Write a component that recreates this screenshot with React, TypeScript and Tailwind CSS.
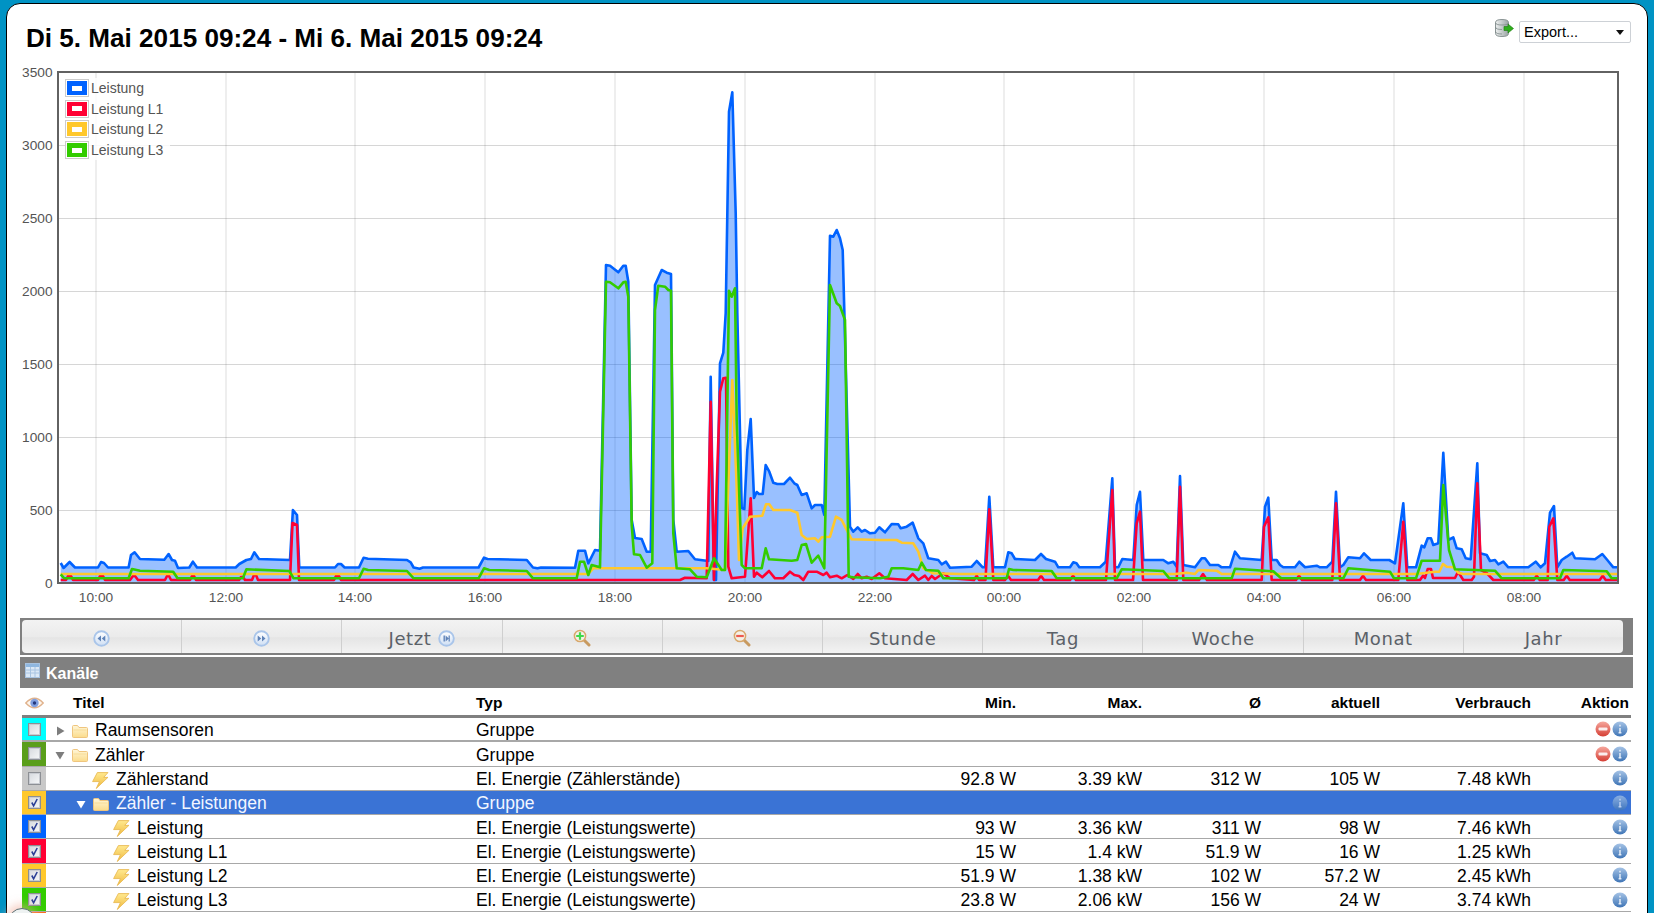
import React from 'react';

const FONT = '"Liberation Sans", Arial, sans-serif';

// chart traces, in page pixels
const BLUE = '60.7,563 63.6,568 69.6,562 75,567.5 98,567.5 101,562 104,563 108,567.5 128.6,567.5 131,555 134.6,552.3 140,559 164.3,559.7 168.6,554 172,560 175,560.7 178,568 189.3,567.5 192.9,561.7 197,567.5 235.7,567.5 239.3,564 246.4,560 251,559 254.3,552.3 259,559 290,560 292.9,510 297,515 299.3,567.5 335,567.5 338,564 341,564 344.6,567.5 359,567.5 363.6,557.7 368,558.7 407,560 410.7,562.3 413.6,567.5 419.6,568.7 423,567.5 478.6,567.5 484,557.7 487.5,559 526.8,560 533,567.5 537.5,568.3 541,567.5 575,567.7 578.3,550.7 585,550.7 588.3,563.3 595,550 600,550.7 606,265 610,265.7 618.3,272.3 623.3,265.7 625.7,265.7 628.3,281.7 631.7,520 635,538 641.7,539 646.7,551.7 650.7,551.7 655,285 661.7,270 666.7,272.7 671,274 673.3,520 676.7,551.7 688.3,551 695,559.3 708.3,561 710.7,376.7 714,580 716,580 720,363.3 723.3,352.7 725.7,313 729,111.7 732.3,92.3 735.7,213 737.3,313 741.7,508 744.3,509 747.3,450 750.7,419 754,498 756.7,492 759,494 762.7,494 765.7,465 769.3,471.7 773.3,482.7 777.3,484 784,484 790,477.7 794.3,483.3 797.3,485 801.7,495 806.7,493.3 811.7,508.3 815,505 821.7,505 824.3,515 830,235.7 833.3,236.7 836.7,230 840,238.3 842.7,250 850,526.7 853.3,531.7 857.7,527.3 861.7,531.7 865,530 870,533.3 875,532.7 879.3,527.3 885,532.3 891.7,524 898.3,524.3 900.7,528.3 906.7,526.7 912.7,522.7 918.3,538.3 923.3,543.3 928.3,558.3 938.3,560 941.7,564.3 946,561.7 950,567.7 971.7,566.7 976.7,561 982.7,567.3 985,567.3 989.3,496.7 993.3,567.3 1005,567.3 1008.3,552.3 1011.7,553.3 1015,559 1035,560 1041,554 1046,559 1055,561.7 1058.3,567.3 1070,567.3 1073.3,562.3 1076.5,563.3 1079.3,567.3 1100,567.3 1105.7,561.7 1112.3,478.3 1115,567.3 1118.3,567.3 1122.3,559 1133.3,560 1136.7,505 1140,491.7 1143.3,560 1163.3,560 1168.3,563.3 1173.3,561.7 1176.7,566.7 1180,476 1183.3,565 1195,567.3 1201.7,558.3 1205,558.3 1210,565 1218.3,565 1221.7,567.3 1230,567.3 1235,551.7 1240,558.3 1261.7,560 1265,506.7 1268.3,497.7 1271.7,560 1276.7,560 1280,565 1283.3,567.3 1295,567.3 1299.3,561.7 1305,567.3 1316.7,565.7 1320,567.3 1326.7,567.3 1332.3,561.7 1336,491.7 1340,567.3 1343.3,565 1348.3,557.3 1360,558.3 1364,553.3 1370.7,560 1389.3,560 1395,563.3 1403.3,503.3 1407.3,567.3 1416,567.3 1421.7,545.7 1424.3,547.3 1427.7,538.3 1431,538.3 1433.3,545 1438.3,543.3 1443.3,452.7 1448.3,540 1453.3,537.3 1456.7,548.3 1461.7,549.3 1465.7,558.3 1470.7,559.3 1477.3,463.3 1480,553.3 1486.7,555 1490,561 1495,560 1498.3,564.3 1503.3,561.7 1508.3,567.3 1528.3,567.3 1535.7,561.7 1540.7,567.3 1545,563.3 1550,512.7 1554,506 1557.3,567.3 1561.7,560 1566.7,556.7 1572.3,552.7 1575,558.3 1595,559.3 1602.3,554 1607.3,560 1613.3,567.3 1617,567.3';

const RED = '60.7,580 66,580 68,576 71,576 73,580 98,580 100,576 103,576 105,580 130,580 133,576 135,576 138,580 165,580 167,576 169,576 171,580 190,580 192,576 194,576 196,580 239,580 241,577 243,577 245,580 252,580 254,575 256,575 258,580 290,580 292.5,523 297,525 299,580 334,580 336,576 339,576 341,580 680,580 685,577.7 706.7,578.3 710.7,401.7 714,580 716.7,486.7 720,391.7 723.3,378.3 726,377.7 728.3,566.7 731.7,578.3 745,576.7 750.7,498.3 754,576.7 756.7,572.7 762.3,577.3 769,571 775,578.3 783.3,578.3 790,571.7 794.3,575 799,576 803.3,580 808.3,571.7 816.7,571.7 823.3,575 826.7,572.7 830,577.3 836.7,575.7 841.7,578.3 847.3,575 853.3,579 857.7,574 861.7,578.3 866.7,576.7 871.7,579 879.3,573.3 885,578.3 906.7,580 912.7,574 918.3,580 925,575.7 928.3,580 931.7,576 935,579 943.3,573.3 950,578.3 974,580 976.7,575.7 979,580 985.5,580 989.3,509.3 993.3,580 1005,580 1008,575.7 1011,580 1038,580 1041,575.7 1044,580 1070,580 1073,575.7 1076,580 1106,580 1112.3,490 1115,580 1133,580 1136.7,523.3 1140,511.7 1143,580 1176.7,580 1180,486.7 1183.3,580 1199,580 1203,574 1207,580 1261.7,580 1264,526.7 1268.3,517.3 1271.7,580 1296,580 1299,575.7 1302,580 1332.3,580 1336,503.3 1340,580 1360,580 1363,575.7 1366,580 1398.3,580 1403.3,521.7 1407.3,580 1420,580 1423,575.7 1425,578 1427.7,569 1431,569 1433,578 1455,578 1458,571.7 1463.3,580 1471.7,580 1474,576.7 1477.3,483.3 1481,570 1486.7,573 1493.3,580 1533.7,580 1536.7,575.7 1539.7,580 1547.7,580 1549.3,526.7 1553.3,518.3 1557.3,580 1563.7,580 1566.7,575.7 1569.7,580 1599.7,580 1602.7,575.7 1605.7,580 1617,580';

const YELLOW = '60.7,574 588.3,574 593.3,568.3 706.7,568.3 725,570 732.3,380 736.7,486.7 739,560 742.7,528.3 750,516.7 762.3,515.7 766,504.3 769.3,504.3 773.3,510 790,510 797.3,512.7 801.7,535 806.7,539 815,538.3 818.3,541.7 821.7,537.3 830,536.7 836,516.7 841.7,520 846.7,530 851.7,539.3 880,540 896.7,540 901.7,542.7 913.3,543.3 918.3,551.7 923.3,568.3 933.3,573.3 960,574 1175,574 1186.7,572.7 1195,574 1198.3,570 1216.7,570.7 1221.7,574 1416.7,574 1426.7,572.7 1435,571.7 1439.3,571.7 1443,564 1446.7,566.7 1453.3,567.3 1458.3,572.7 1463.3,574 1617,574';

const GREEN = '60.7,574.3 64.3,578.3 128.6,578.3 132,569 140,570.7 173.2,571.7 177.5,578.3 242.9,578.3 246.4,569.3 289.3,571 293.6,578.3 359,578.3 363.6,568.7 368,570 407,571 413.6,578.3 478.6,578.3 484,568.3 489.3,570 526.8,571 533,578.3 576.7,578.3 580,561.7 584,561.7 588.3,575 591.7,565 600,567.3 606,281.7 610,282.3 618.3,288.3 623.3,282.3 625.7,281.7 628.3,296.7 631.7,525 634,554.3 640,555 646.7,567.7 652.3,563.3 655,310 658.3,285.7 665,286.7 668.3,290 671,290.7 673.3,533.3 676.7,568.3 690,569.3 696.7,576.7 706.7,577.3 714,558.3 721.7,570 725,570 729,290.7 731.7,296.7 735,288.3 736.7,420 741.7,565 745,568.3 761.7,568.3 765.7,548.3 769,559.3 791.7,560.7 797.3,560 801.7,545 806,544 811.7,562.7 818.3,555.7 824.3,568.3 830,285 836.7,303.3 840,306 845,320 848.7,576.7 853.3,577.3 880,578.3 888.3,576.7 891.7,568.3 903.3,568.3 918.3,570 921.7,562.7 926,570 938.3,570.7 943.3,578.3 1006.7,578.3 1009,569 1013.3,570 1051.7,571 1056.7,578.3 1116.7,578.3 1121.7,569.3 1163.3,571 1169.3,578.3 1231.7,578.3 1235,568.7 1273.3,571.3 1280,577.3 1281.7,578.3 1343.3,578.3 1348.3,568.3 1390,571.7 1394,578.3 1416,578.3 1421.7,560.7 1440,560.7 1443.3,485 1449,550 1455,569.3 1495,570.7 1501.7,578.3 1560,578.3 1563.3,570 1606.7,571.3 1611.7,578.3 1617,578.3';

const yTicks: [string, number][] = [['3500', 72], ['3000', 145], ['2500', 218], ['2000', 291], ['1500', 364], ['1000', 437], ['500', 510], ['0', 583]];
const xTicks: [string, number][] = [['10:00', 96], ['12:00', 226], ['14:00', 355], ['16:00', 485], ['18:00', 615], ['20:00', 745], ['22:00', 875], ['00:00', 1004], ['02:00', 1134], ['04:00', 1264], ['06:00', 1394], ['08:00', 1524]];

const legend = [
    { label: 'Leistung', color: 'bg-[#0062ff]' },
    { label: 'Leistung L1', color: 'bg-[#ff0033]' },
    { label: 'Leistung L2', color: 'bg-[#ffc82c]' },
    { label: 'Leistung L3', color: 'bg-[#33cc00]' },
];

function Gradients() {
    return (
        <svg className="absolute w-0 h-0" aria-hidden="true">
            <defs>
                <linearGradient id="gBolt" x1="0" y1="0" x2="0" y2="1">
                    <stop offset="0" stopColor="#ffe98f" />
                    <stop offset="1" stopColor="#f0b93e" />
                </linearGradient>
                <linearGradient id="gFolder" x1="0" y1="0" x2="0" y2="1">
                    <stop offset="0" stopColor="#fff6d8" />
                    <stop offset="1" stopColor="#fbdc8c" />
                </linearGradient>
                <linearGradient id="gInfo" x1="0" y1="0" x2="0" y2="1">
                    <stop offset="0" stopColor="#a5c3e6" />
                    <stop offset="1" stopColor="#3f75b6" />
                </linearGradient>
                <linearGradient id="gMinus" x1="0" y1="0" x2="0" y2="1">
                    <stop offset="0" stopColor="#f6a79d" />
                    <stop offset="1" stopColor="#d53f35" />
                </linearGradient>
                <linearGradient id="gNav" x1="0" y1="0" x2="0" y2="1">
                    <stop offset="0" stopColor="#ffffff" />
                    <stop offset="1" stopColor="#cfdff4" />
                </linearGradient>
                <linearGradient id="gDb" x1="0" y1="0" x2="1" y2="0">
                    <stop offset="0" stopColor="#eef0f0" />
                    <stop offset="1" stopColor="#9aa4a4" />
                </linearGradient>
            </defs>
        </svg>
    );
}

function Bolt() {
    return (
        <svg width="18" height="18" viewBox="0 0 17 17" className="shrink-0">
            <path d="M6 1.5h10l-4 4.5h4L5 16.5 8 10H1.5z" fill="url(#gBolt)" stroke="#e8b850" strokeWidth="0.8" />
        </svg>
    );
}

function Folder() {
    return (
        <svg width="16" height="14" viewBox="0 0 16 14" className="shrink-0">
            <path d="M.5 2.5q0-1 1-1h4l1.5 2h7.5q1 0 1 1v8q0 1-1 1h-13q-1 0-1-1z" fill="url(#gFolder)" stroke="#efc57e" />
            <path d="M1.5 6h13" stroke="#f7dc98" />
        </svg>
    );
}

function Info({ faded }: { faded?: boolean }) {
    return (
        <svg width="16" height="16" viewBox="0 0 16 16" className={faded ? 'shrink-0 opacity-75' : 'shrink-0'}>
            <circle cx="8" cy="8" r="7.5" fill="url(#gInfo)" />
            <path d="M8 3.8v1.6M8 7v4.5M6.6 11.7h2.8" stroke="#e6eef8" strokeWidth="1.5" />
        </svg>
    );
}

function Minus() {
    return (
        <svg width="16" height="16" viewBox="0 0 16 16" className="shrink-0">
            <circle cx="8" cy="8" r="7.5" fill="url(#gMinus)" />
            <rect x="3.5" y="6.5" width="9" height="3" rx="1" fill="#fbeeee" />
        </svg>
    );
}

function Arrow({ open, light }: { open?: boolean; light?: boolean }) {
    const fill = light ? '#ffffff' : '#7d7d7d';
    return (
        <svg width="10" height="10" viewBox="0 0 10 10" className="shrink-0">
            {open ? <path d="M.5 2h9L5 9.5z" fill={fill} /> : <path d="M2 .5 9.5 5 2 9.5z" fill={fill} />}
        </svg>
    );
}

function Check({ on }: { on?: boolean }) {
    return (
        <span className="flex w-[13px] h-[13px] items-center justify-center border border-[#8c8f94] bg-[linear-gradient(135deg,#d6d9de,#f7f8f9)] shadow-[inset_0_0_0_1px_#c9ccd2] ml-[6px] shrink-0">
            {on && (
                <svg width="11" height="11" viewBox="0 0 11 11">
                    <path d="M2.8 5.5 4.6 8.8 8.2 2" fill="none" stroke="#2b3f96" strokeWidth="1.6" />
                </svg>
            )}
        </span>
    );
}

function NavIcon({ kind }: { kind: 'prev' | 'next' | 'end' }) {
    return (
        <svg width="17" height="17" viewBox="0 0 17 17" className="shrink-0">
            <circle cx="8.5" cy="8.5" r="7.3" fill="url(#gNav)" stroke="#a9c5ea" strokeWidth="1.9" />
            {kind === 'prev' && <path d="M8 5.5v6L4.5 8.5zM12.3 5.5v6L8.8 8.5z" fill="#5f83b8" />}
            {kind === 'next' && <path d="M9 5.5v6l3.5-3zM4.7 5.5v6l3.5-3z" fill="#5f83b8" />}
            {kind === 'end' && <path d="M5.5 5.5v6h1.4v-6zM7.6 5.5v6l3.2-3zM10.6 5.5v6h1.2v-6z" fill="#5f83b8" />}
        </svg>
    );
}

function Zoom({ plus }: { plus?: boolean }) {
    return (
        <svg width="18" height="18" viewBox="0 0 18 18" className="shrink-0">
            <path d="M11 11l5 5" stroke="#c89a60" strokeWidth="3" strokeLinecap="round" />
            <circle cx="7" cy="7" r="5.6" fill="#f4f1e6" stroke="#d8a76a" strokeWidth="1.5" />
            {plus ? (
                <path d="M7 3.2v7.6M3.2 7h7.6" stroke="#3fd94a" strokeWidth="2.2" />
            ) : (
                <path d="M3.2 7h7.6" stroke="#ee5b4e" strokeWidth="2.2" />
            )}
        </svg>
    );
}

function TableIcon() {
    return (
        <svg width="15" height="15" viewBox="0 0 15 15" className="shrink-0">
            <rect x=".5" y=".5" width="14" height="14" fill="#dbe8f6" stroke="#a7c2e0" />
            <rect x="1" y="1" width="13" height="3" fill="#8fb7e0" />
            <path d="M1 7h13M1 10h13M5.5 4v10M10 4v10" stroke="#a8c4e2" />
        </svg>
    );
}

function Eye() {
    return (
        <svg width="19" height="14" viewBox="0 0 19 14">
            <path d="M.8 7Q9.5-2.5 18.2 7 9.5 16.5.8 7z" fill="#fdf6ee" stroke="#e0b28c" strokeWidth="1.4" />
            <circle cx="9.5" cy="7" r="4.2" fill="#7f9fe0" />
            <circle cx="9.5" cy="7" r="1.7" fill="#23387c" />
        </svg>
    );
}

function ExportIcon() {
    return (
        <svg width="19" height="18" viewBox="0 0 19 18" className="shrink-0">
            <path d="M.5 3.5q0-3 6.5-3t6.5 3v11q0 3-6.5 3t-6.5-3z" fill="url(#gDb)" stroke="#8a9494" />
            <path d="M.5 3.5q0 2.5 6.5 2.5t6.5-2.5M.5 8q0 2.5 6.5 2.5M.5 12.5q0 2.5 6.5 2.5" fill="none" stroke="#7f8a8a" strokeWidth="0.8" />
            <path d="M9 7.5h4V5l5.5 4.5L13 14v-2.5H9z" fill="#2fae1c" stroke="#1c7a10" strokeWidth="0.6" />
        </svg>
    );
}

function Chart() {
    return (
        <div className="relative h-[554px]">
            <svg viewBox="20 64 1613 554" width="1613" height="554" className="block">
                <defs>
                    <clipPath id="plot">
                        <rect x="58" y="72" width="1560" height="511" />
                    </clipPath>
                </defs>
                {yTicks.slice(1, -1).map(([, y]) => (
                    <line key={y} x1="58" x2="1618" y1={y + 0.5} y2={y + 0.5} stroke="#545454" strokeOpacity="0.24" />
                ))}
                {xTicks.map(([, x]) => (
                    <line key={x} x1={x} x2={x} y1="72" y2="583" stroke="#545454" strokeOpacity="0.2" />
                ))}
                <g clipPath="url(#plot)" fill="none" strokeWidth="2.6" strokeLinejoin="round">
                    <polygon points={`60.7,582 ${BLUE} 1617,582`} fill="#0062ff" fillOpacity="0.4" stroke="none" />
                    <polyline points={BLUE} stroke="#0062ff" />
                    <polyline points={RED} stroke="#ff0033" />
                    <polyline points={YELLOW} stroke="#ffc82c" />
                    <polyline points={GREEN} stroke="#33cc00" />
                </g>
                <rect x="58" y="72" width="1560" height="511" fill="none" stroke="#626262" strokeWidth="2" />
                <g fill="#545454" fontSize="13.7" style={{ fontFamily: FONT }}>
                    {yTicks.map(([t, y]) => (
                        <text key={t} x="52.5" y={y + 5} textAnchor="end">{t}</text>
                    ))}
                    {xTicks.map(([t, x]) => (
                        <text key={t} x={x} y="602" textAnchor="middle">{t}</text>
                    ))}
                </g>
            </svg>
            <div className="absolute left-[45px] top-[14px] w-[105px] flex flex-col bg-white/85">
                {legend.map((l) => (
                    <div key={l.label} className="flex items-center h-[20.6px] gap-[2px]">
                        <span className="border border-[#cccccc] p-px shrink-0">
                            <span className={`flex w-[20px] h-[14px] items-center justify-center ${l.color}`}>
                                <span className="w-[10px] h-[5px] bg-white" />
                            </span>
                        </span>
                        <span className="text-[14px] leading-none text-[#545454] whitespace-nowrap">{l.label}</span>
                    </div>
                ))}
            </div>
        </div>
    );
}

function Toolbar() {
    const btn = 'flex-1 flex items-center justify-center gap-[7px] h-full pt-[3px] border-r border-[#cfcfcf] last:border-r-0 text-[18px] tracking-[0.6px] text-[#5b6168]';
    return (
        <div className="h-[37px] bg-[#808080] pl-[2px] pr-[10px] py-[2px]">
            <div
                className="flex h-full rounded-[4px] bg-[linear-gradient(#f3f3f3,#ebebeb_50%,#e5e5e5_54%,#f3f3f3)]"
                style={{ fontFamily: '"DejaVu Sans", sans-serif' }}
            >
                <div className={btn}><NavIcon kind="prev" /></div>
                <div className={btn}><NavIcon kind="next" /></div>
                <div className={btn}>Jetzt <NavIcon kind="end" /></div>
                <div className={btn}><Zoom plus /></div>
                <div className={btn}><Zoom /></div>
                <div className={btn}>Stunde</div>
                <div className={btn}>Tag</div>
                <div className={btn}>Woche</div>
                <div className={btn}>Monat</div>
                <div className={btn}>Jahr</div>
            </div>
        </div>
    );
}

const cols = 'grid grid-cols-[24px_430px_370px_170px_126px_119px_119px_151px_100px] items-center';

type Row = {
    title: string;
    typ: string;
    color: string;
    pad: string;
    group?: boolean;
    open?: boolean;
    on?: boolean;
    selected?: boolean;
    thick?: boolean;
    vals?: string[];
};

const rows: Row[] = [
    { title: 'Raumsensoren', typ: 'Gruppe', color: 'bg-[#00ffff]', pad: 'pl-[9px]', group: true, thick: true },
    { title: 'Zähler', typ: 'Gruppe', color: 'bg-[#5a9e1a]', pad: 'pl-[9px]', group: true, open: true },
    { title: 'Zählerstand', typ: 'El. Energie (Zählerstände)', color: 'bg-[#c8c8c8]', pad: 'pl-[45px]', vals: ['92.8 W', '3.39 kW', '312 W', '105 W', '7.48 kWh'] },
    { title: 'Zähler - Leistungen', typ: 'Gruppe', color: 'bg-[#ffc82c]', pad: 'pl-[30px]', group: true, open: true, on: true, selected: true },
    { title: 'Leistung', typ: 'El. Energie (Leistungswerte)', color: 'bg-[#0062ff]', pad: 'pl-[66px]', on: true, vals: ['93 W', '3.36 kW', '311 W', '98 W', '7.46 kWh'] },
    { title: 'Leistung L1', typ: 'El. Energie (Leistungswerte)', color: 'bg-[#ff0033]', pad: 'pl-[66px]', on: true, vals: ['15 W', '1.4 kW', '51.9 W', '16 W', '1.25 kWh'] },
    { title: 'Leistung L2', typ: 'El. Energie (Leistungswerte)', color: 'bg-[#ffc82c]', pad: 'pl-[66px]', on: true, vals: ['51.9 W', '1.38 kW', '102 W', '57.2 W', '2.45 kWh'] },
    { title: 'Leistung L3', typ: 'El. Energie (Leistungswerte)', color: 'bg-[#33cc00]', pad: 'pl-[66px]', on: true, vals: ['23.8 W', '2.06 kW', '156 W', '24 W', '3.74 kWh'] },
];

function TableRow({ r }: { r: Row }) {
    const line = r.thick ? 'border-b-2 border-[#a8a8a8]' : 'border-b border-[#a8a8a8]';
    const look = r.selected ? 'bg-[#3a73d5] text-[#f2f6ff]' : 'text-black';
    return (
        <div className={`${cols} h-[24.3px] items-stretch text-[17.5px] leading-none ${line} ${look}`}>
            <div className={`flex items-center ${r.color}`}><Check on={r.on} /></div>
            <div className={`flex items-center pt-[3px] ${r.pad}`}>
                {r.group ? (
                    <>
                        <Arrow open={r.open} light={r.selected} />
                        <span className="ml-[7px]"><Folder /></span>
                    </>
                ) : (
                    <Bolt />
                )}
                <span className="ml-[7px]">{r.title}</span>
            </div>
            <div className="flex items-center pt-[3px]">{r.typ}</div>
            {[0, 1, 2, 3, 4].map((i) => (
                <div key={i} className="flex items-center justify-end pt-[3px]">{r.vals ? r.vals[i] : ''}</div>
            ))}
            <div className="flex items-center justify-end gap-px pr-[3px]">
                {r.group && !r.selected && <Minus />}
                <Info faded={r.selected} />
            </div>
        </div>
    );
}

function Channels() {
    return (
        <>
            <div className="mt-[2px] h-[31px] bg-[#808080] flex items-center gap-[6px] pl-[5px] pt-[2px] text-[16px] font-bold text-white">
                <span className="-mt-[6px]"><TableIcon /></span>
                <span>Kanäle</span>
            </div>
            <div className="ml-[2px] mr-[2px]">
                <div className={`${cols} h-[30px] pt-[3px] border-b-[3px] border-[#808080] text-[15.5px] font-bold text-black`}>
                    <div className="flex justify-center"><Eye /></div>
                    <div className="pl-[27px]">Titel</div>
                    <div>Typ</div>
                    <div className="text-right">Min.</div>
                    <div className="text-right">Max.</div>
                    <div className="text-right">Ø</div>
                    <div className="text-right">aktuell</div>
                    <div className="text-right">Verbrauch</div>
                    <div className="text-right pr-[2px]">Aktion</div>
                </div>
                {rows.map((r) => (
                    <TableRow key={r.title} r={r} />
                ))}
                <div className="w-[24px] h-[24px] bg-[#ff6a1a]" />
            </div>
        </>
    );
}

export default function App() {
    return (
        <div className="relative h-[913px] overflow-hidden bg-[#0093c4] pt-[3px] pl-[6px] pr-[6px]" style={{ fontFamily: FONT }}>
            <Gradients />
            <div className="h-[1000px] rounded-t-[14px] border border-black bg-white pl-[13px] pr-[14px]">
                <div className="flex items-start justify-between h-[60px]">
                    <h1 className="mt-[18px] ml-[6px] text-[26.1px] leading-[32px] font-bold text-black">
                        Di 5. Mai 2015 09:24 - Mi 6. Mai 2015 09:24
                    </h1>
                    <div className="flex items-start gap-[5px] mt-[15px] mr-[2px]">
                        <ExportIcon />
                        <div className="mt-[2px] w-[112px] h-[22px] flex items-center justify-between border border-[#cdd1d6] rounded-[2px] bg-white pl-[4px] pr-[6px] pt-[1px] text-[14.5px] text-black">
                            <span>Export...</span>
                            <svg width="8" height="5" viewBox="0 0 8 5"><path d="M0 0h8L4 5z" fill="#111" /></svg>
                        </div>
                    </div>
                </div>
                <Chart />
                <Toolbar />
                <Channels />
            </div>
            <div className="absolute left-[8px] top-[908px] w-[28px] h-[28px] rounded-full border border-[#5c6f73] bg-[#eef2f2] shadow-[0_0_8px_4px_rgba(240,170,150,0.5)]" />
        </div>
    );
}
